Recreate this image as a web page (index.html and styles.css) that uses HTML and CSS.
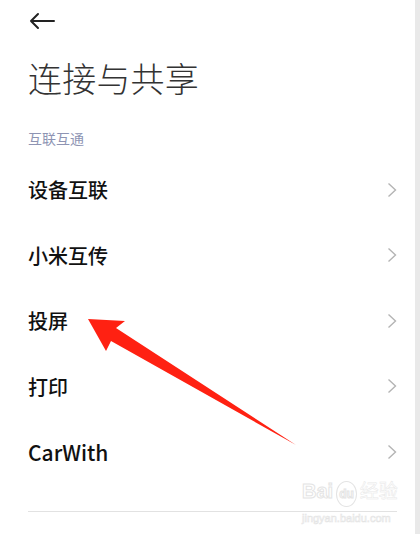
FILE: index.html
```html
<!DOCTYPE html>
<html lang="zh-CN">
<head>
    <meta charset="UTF-8">
    <meta name="viewport" content="width=device-width, initial-scale=1.0">
    <title>连接与共享</title>
    <link rel="stylesheet" href="styles.css">
</head>
<body>
    <div class="screen">
        <div class="top-bar">
            <svg class="back-icon" width="26" height="18" viewBox="0 0 26 18">
                <path d="M2 9 H25 M9 2 L2 9 L9 16" fill="none" stroke="#222" stroke-width="2" stroke-linecap="round" stroke-linejoin="round"/>
            </svg>
        </div>

        <h1 class="page-title">连接与共享</h1>
        <div class="section-label">互联互通</div>

        <ul class="menu">
            <li class="menu-item"><span>设备互联</span><svg class="chevron" width="10" height="16" viewBox="0 0 10 16"><path d="M1.5 1.5 L8.5 8 L1.5 14.5" fill="none" stroke="#b4b4b4" stroke-width="1.4"/></svg></li>
            <li class="menu-item"><span>小米互传</span><svg class="chevron" width="10" height="16" viewBox="0 0 10 16"><path d="M1.5 1.5 L8.5 8 L1.5 14.5" fill="none" stroke="#b4b4b4" stroke-width="1.4"/></svg></li>
            <li class="menu-item"><span>投屏</span><svg class="chevron" width="10" height="16" viewBox="0 0 10 16"><path d="M1.5 1.5 L8.5 8 L1.5 14.5" fill="none" stroke="#b4b4b4" stroke-width="1.4"/></svg></li>
            <li class="menu-item"><span>打印</span><svg class="chevron" width="10" height="16" viewBox="0 0 10 16"><path d="M1.5 1.5 L8.5 8 L1.5 14.5" fill="none" stroke="#b4b4b4" stroke-width="1.4"/></svg></li>
            <li class="menu-item latin"><span>CarWith</span><svg class="chevron" width="10" height="16" viewBox="0 0 10 16"><path d="M1.5 1.5 L8.5 8 L1.5 14.5" fill="none" stroke="#b4b4b4" stroke-width="1.4"/></svg></li>
        </ul>

        <div class="divider"></div>

        <!-- annotation arrow drawn over the list -->
        <svg class="pointer" width="420" height="534" viewBox="0 0 420 534">
            <polygon points="88,319 125,321 116,328 296,445 111,341 106,351" fill="#ff2112"/>
        </svg>

        <div class="watermark">
            <div class="wm-logo">Bai<span class="wm-du">du</span><span class="wm-cn">经验</span></div>
            <div class="wm-url">jingyan.baidu.com</div>
        </div>
    </div>
</body>
</html>
```

FILE: styles.css
```css
* {
    box-sizing: border-box;
}
body {
    margin: 0;
    background: #fff;
    font-family: "Noto Sans CJK SC", "Noto Sans", sans-serif;
}
.screen {
    position: relative;
    width: 420px;
    min-height: 534px;
    padding: 0 18px 0 28px;
    border-right: 5px solid #e9e9e9;
    overflow: hidden;
}
.top-bar {
    height: 40px;
    display: flex;
    align-items: center;
}
.back-icon {
    margin-left: 1px;
    margin-top: 1px;
}
.page-title {
    margin: 14px 0 0;
    font-size: 34px;
    line-height: 48px;
    font-weight: 300;
    color: #333;
    letter-spacing: 0.2px;
}
.section-label {
    margin-top: 26px;
    font-size: 14px;
    line-height: 20px;
    color: #8e94b3;
}
.menu {
    list-style: none;
    margin: 9px 0 0;
    padding: 0;
}
.menu-item {
    height: 65.5px;
    display: flex;
    align-items: center;
    justify-content: space-between;
    font-size: 20px;
    font-weight: 500;
    color: #111;
}
.menu-item.latin {
    font-size: 21px;
}
.divider {
    margin-top: 26px;
    height: 1px;
    background: #e2e2e2;
}
.pointer {
    position: absolute;
    left: 0;
    top: 0;
}
.watermark {
    position: absolute;
    left: 302px;
    top: 478px;
    color: #fff;
}
.wm-logo {
    font-family: "Liberation Sans", sans-serif;
    font-size: 20px;
    font-weight: 700;
    line-height: 24px;
    -webkit-text-stroke: 1px #e4e4e4;
}
.wm-du {
    display: inline-block;
    margin: 0 3px;
    padding: 0 2px;
    font-size: 12px;
    border-radius: 50%;
    border: 1px solid #e4e4e4;
}
.wm-cn {
    font-family: "Noto Sans CJK SC", sans-serif;
    font-size: 19px;
    font-weight: 400;
    color: #fff;
    -webkit-text-stroke: 0.5px #e8e8e8;
}
.wm-url {
    font-family: "Liberation Sans", sans-serif;
    font-size: 11px;
    line-height: 14px;
    color: #fff;
    -webkit-text-stroke: 0.6px #e4e4e4;
    margin-top: 4px;
}
```
